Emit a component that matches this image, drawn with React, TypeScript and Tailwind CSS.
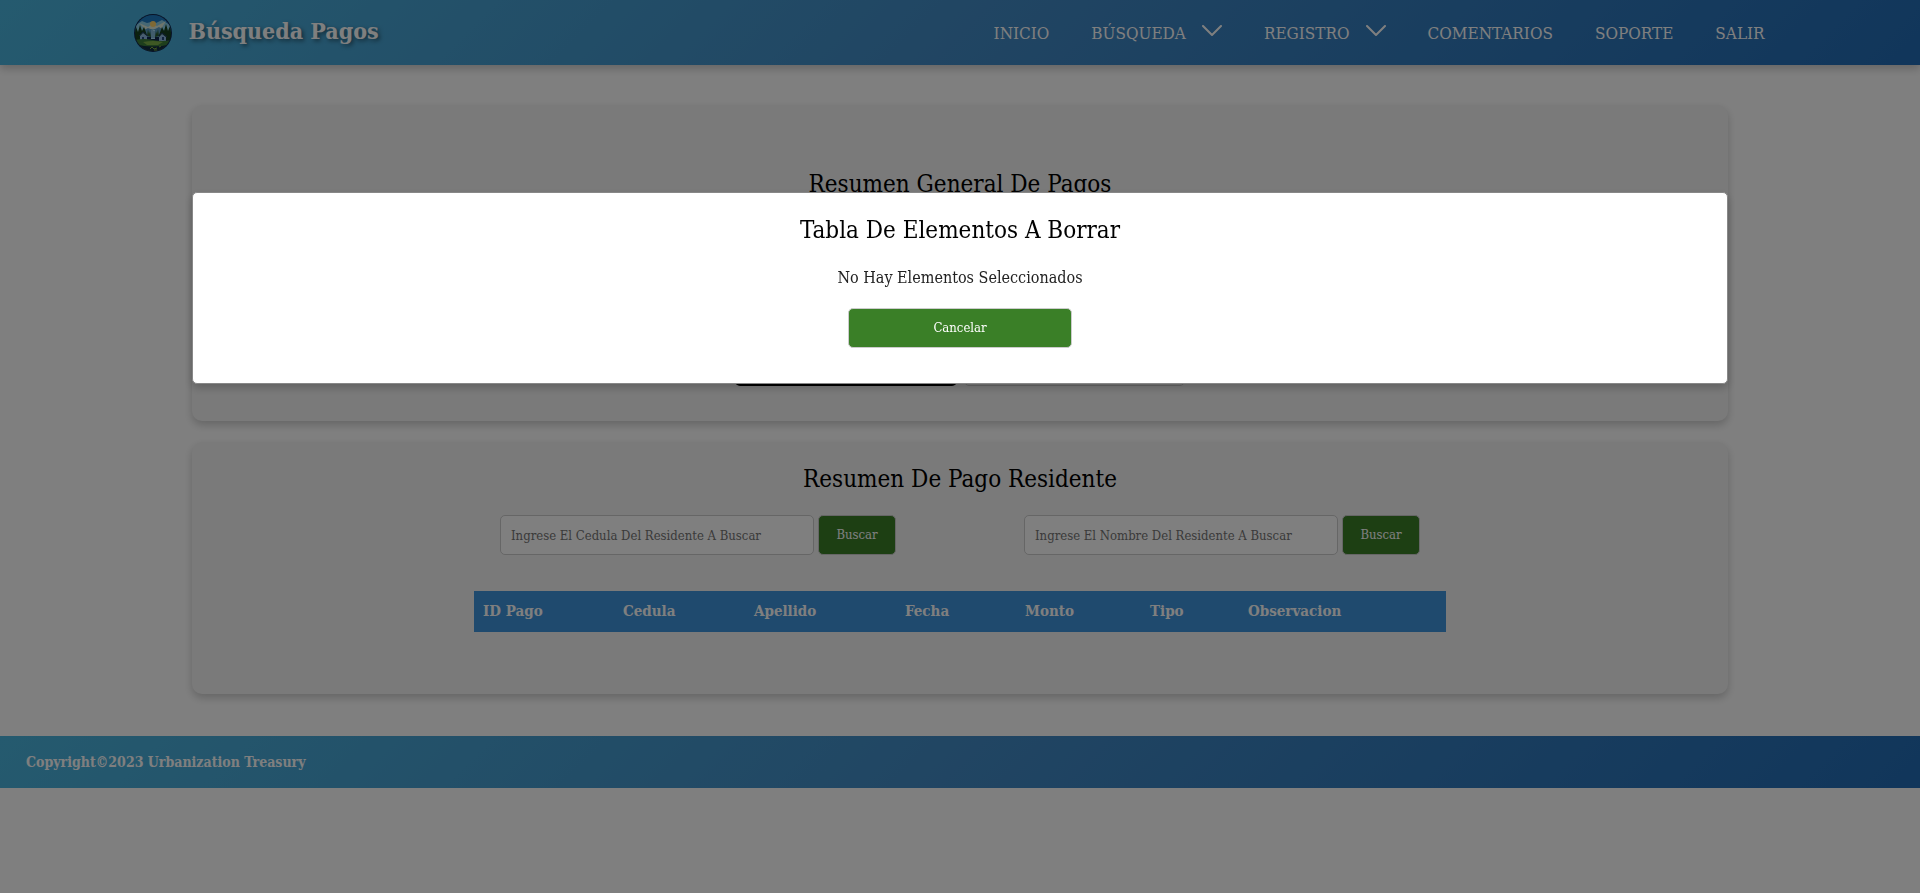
import type { ReactNode } from "react";

const barGradient = "bg-[linear-gradient(135deg,#4ab5de_0%,#428bc6_50%,#226cb6_100%)]";
const card = "rounded-[10px] bg-[#f4f4f4] shadow-[0_4px_8px_rgba(0,0,0,0.2)]";
const navItem = "flex items-center px-[21px] text-[17px] leading-6 text-white";

function Logo() {
  return (
    <svg viewBox="0 0 38 38" className="size-[38px]" role="img" aria-label="Urbanization Treasury">
      <defs>
        <clipPath id="logo-clip">
          <circle cx="19" cy="19" r="18" />
        </clipPath>
      </defs>
      <circle cx="19" cy="19" r="19" fill="#10264e" />
      <g clipPath="url(#logo-clip)">
        <rect width="38" height="20" fill="#1f7cc4" />
        <path d="M2 11l6-4 5 2 4-1 5 1 6-3 8 5v8H2z" fill="#8fd0e8" />
        <path d="M5 9l9 4 4-3 5 2 9-5-5 8H11z" fill="#dcead8" />
        <circle cx="19" cy="10" r="3" fill="#ffd36a" />
        <path d="M8 17l6-3 5 2 6-3 6 4v6H8z" fill="#5a9cc8" />
        <path d="M0 20l2-7 2 5 2-7 2 6 2-4 3 8v5H0zM38 20l-2-8-2 5-2-7-2 7-2-4-3 8v5h11z" fill="#17401e" />
        <path d="M13 22l1-7 1 5 1-3 1 6zM25 22l-1-7-1 5-1-3-1 6z" fill="#2a5b2a" />
        <path d="M17 16h4v9h-4z" fill="#a8dcf4" />
        <path d="M18 16v8M20 17v7" stroke="#3d78a8" strokeWidth=".7" />
        <path d="M6 22l3-3 4 3v5H6zM25 23l3-3 4 3v4h-7z" fill="#8eb9e0" />
        <path d="M5 22l4-4 5 4M24 22l4-3 5 4" stroke="#203c6c" fill="none" />
        <path d="M8 23h2v3H8zM28 23h2v3h-2z" fill="#274b80" />
        <path d="M1 26q9-2 18 0t18 0v12H1z" fill="#3c7c3a" />
        <path d="M9 28q10-2 20 0l-5 3H13z" fill="#7cb048" />
        <path d="M1 30q18 5 36 0v9H1z" fill="#112a40" />
        <path d="M16 35l2-2 2 2 3-1M20 36h3M25 33l2-1" stroke="#7aa83c" fill="none" />
      </g>
    </svg>
  );
}

function Chevron() {
  return (
    <svg viewBox="0 0 20 12" className="mb-1 ml-4 h-3 w-5" fill="none" stroke="white" strokeWidth="2" aria-hidden="true">
      <path d="M1 1l9 9 9-9" strokeLinecap="round" strokeLinejoin="round" />
    </svg>
  );
}

function SearchForm({ id, label }: { id: string; label: string }) {
  return (
    <form className="flex items-center gap-1" onSubmit={(e) => e.preventDefault()}>
      <input
        id={id}
        type="text"
        aria-label={label}
        placeholder={label}
        className="h-10 w-[314px] rounded-[5px] border border-[#cccccc] bg-white px-2.5 text-[13px] placeholder:text-[#757575]"
      />
      <button type="submit" className="h-10 w-[78px] rounded-[5px] border border-[#cccccc] bg-[#3a7f27] text-[13px] text-white">
        Buscar
      </button>
    </form>
  );
}

function Heading({ children }: { children: ReactNode }) {
  return <h2 className="text-center text-2xl text-black">{children}</h2>;
}

const columns = [
  { name: "ID Pago", width: "w-[140px]" },
  { name: "Cedula", width: "w-[131px]" },
  { name: "Apellido", width: "w-[151px]" },
  { name: "Fecha", width: "w-[120px]" },
  { name: "Monto", width: "w-[125px]" },
  { name: "Tipo", width: "w-[98px]" },
  { name: "Observacion", width: "w-[207px]" },
];

export default function App() {
  return (
    <div className="min-h-screen bg-white font-['Roboto_Slab','DejaVu_Serif_Condensed','DejaVu_Serif',serif] text-black">
      <header className={`${barGradient} flex h-[65px] items-center justify-between px-[7%] shadow-[0_4px_8px_rgba(0,0,0,0.2)]`}>
        <div className="flex items-center gap-4">
          <Logo />
          <h1 className="pb-1 text-[23px] leading-8 font-bold text-white [text-shadow:2px_2px_4px_rgba(0,0,0,0.5)]">Búsqueda Pagos</h1>
        </div>
        <nav className="flex items-center">
          <a href="#inicio" className={navItem}>INICIO</a>
          <button type="button" className={navItem}>BÚSQUEDA<Chevron /></button>
          <button type="button" className={navItem}>REGISTRO<Chevron /></button>
          <a href="#comentarios" className={navItem}>COMENTARIOS</a>
          <a href="#soporte" className={navItem}>SOPORTE</a>
          <a href="#salir" className={navItem}>SALIR</a>
        </nav>
      </header>

      <main className="mx-auto flex w-4/5 flex-col gap-[21px] pt-10 pb-[42px]">
        <section className={`${card} flex h-[316px] flex-col items-center justify-between pt-[63px] pb-[35px]`}>
          <Heading>Resumen General De Pagos</Heading>
          <div className="flex gap-[7px]">
            <button type="button" aria-label="Buscar pagos" className="h-10 w-[222px] rounded-[5px] bg-black" />
            <button type="button" aria-label="Borrar pagos" className="h-10 w-[221px] rounded-[5px] border border-[#cccccc] bg-[#f4f4f4]" />
          </div>
        </section>

        <section className={`${card} flex flex-col items-center pt-[21px] pb-[62px]`}>
          <Heading>Resumen De Pago Residente</Heading>
          <div className="mt-5 flex flex-wrap justify-center gap-32">
            <SearchForm id="cedula" label="Ingrese El Cedula Del Residente A Buscar" />
            <SearchForm id="nombre" label="Ingrese El Nombre Del Residente A Buscar" />
          </div>
          <table className="mt-9 table-fixed bg-[#3f95dc] text-left text-white">
            <thead>
              <tr className="h-[41px]">
                {columns.map((c) => (
                  <th key={c.name} scope="col" className={`${c.width} px-[9px] text-[15px] font-bold`}>
                    {c.name}
                  </th>
                ))}
              </tr>
            </thead>
          </table>
        </section>
      </main>

      <footer className={`${barGradient} flex h-[52px] items-center px-[26px] text-sm font-bold text-white`}>
        Copyright©2023 Urbanization Treasury
      </footer>

      <div className="fixed inset-0 flex items-start justify-center bg-black/50 pt-48">
        <div
          role="dialog"
          aria-modal="true"
          aria-labelledby="dialog-title"
          className="flex w-4/5 flex-col items-center rounded-[5px] border border-[#888888] bg-white pt-[21px] pb-[35px] shadow-[0_4px_8px_rgba(0,0,0,0.2)]"
        >
          <h2 id="dialog-title" className="text-2xl font-medium">Tabla De Elementos A Borrar</h2>
          <p className="mt-5 text-base text-[#222222]">No Hay Elementos Seleccionados</p>
          <button type="button" className="mt-[18px] h-10 w-[224px] rounded-[5px] border border-[#cccccc] bg-[#3a7f27] text-[13px] text-white">
            Cancelar
          </button>
        </div>
      </div>
    </div>
  );
}
